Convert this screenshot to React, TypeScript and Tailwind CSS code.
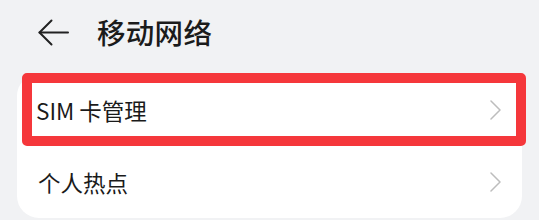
export default function App() {
  const font = { fontFamily: '"Noto Sans CJK SC", "Noto Sans", sans-serif' };
  return (
    <div className="w-[539px] h-[220px] overflow-hidden bg-[#f1f2f4]" style={font}>
      {/* Header */}
      <div className="h-[64px] flex items-center pl-[38px]">
        <svg width="31" height="27" viewBox="0 0 31 27" fill="none" stroke="#222" strokeWidth="2" strokeLinecap="round" strokeLinejoin="round">
          <path d="M1.5 13.5H30" />
          <path d="M13.5 1.5L1.5 13.5L13.5 25.5" />
        </svg>
        <h1 className="ml-[28px] text-[28.5px] font-medium text-[#1b1b1b] leading-none tracking-[0.3px]">移动网络</h1>
      </div>

      {/* Card */}
      <div className="relative mt-[10px] ml-[17px] w-[505px] bg-white rounded-[22px]">
        <div className="h-[72px] flex items-center justify-between pl-[19px] pr-[21px]">
          <span className="text-[22.5px] text-[#1a1a1a] leading-none">SIM 卡管理</span>
          <Chevron />
        </div>
        <div className="h-[72px] flex items-center justify-between pl-[21px] pr-[21px]">
          <span className="text-[22.5px] text-[#1a1a1a] leading-none">个人热点</span>
          <Chevron />
        </div>

        {/* Highlight annotation */}
        <div className="absolute left-[5px] top-[-1px] w-[504px] h-[73px] border-[10.5px] border-[#f5373b] rounded-[5px] pointer-events-none" />
      </div>
    </div>
  );
}

function Chevron() {
  return (
    <svg width="11" height="20" viewBox="0 0 11 20" fill="none" stroke="#bdbdbd" strokeWidth="1.5" strokeLinecap="round" strokeLinejoin="round">
      <path d="M1 1L10 10L1 19" />
    </svg>
  );
}
